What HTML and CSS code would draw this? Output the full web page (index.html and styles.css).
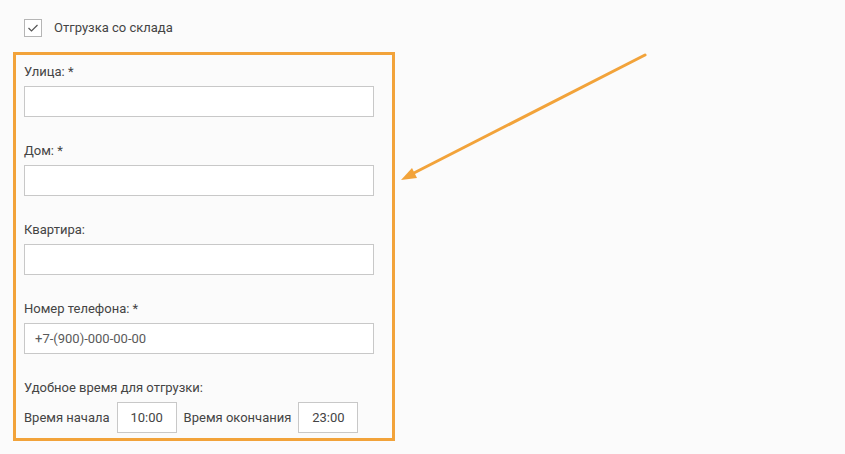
FILE: index.html
```html
<!DOCTYPE html>
<html lang="ru">
<head>
<meta charset="utf-8">
<link rel="stylesheet" href="styles.css">
</head>
<body>
<div class="page">
  <label class="check-row">
    <span class="checkbox">
      <svg width="12" height="10" viewBox="0 0 12 10"><path d="M1.5 5 L4.5 8 L10.5 2" fill="none" stroke="#555" stroke-width="1.2"/></svg>
    </span>
    <span class="check-label">Отгрузка со склада</span>
  </label>
  <div class="box">
    <div class="field">
      <div class="label">Улица: *</div>
      <div class="input"></div>
    </div>
    <div class="field">
      <div class="label">Дом: *</div>
      <div class="input"></div>
    </div>
    <div class="field">
      <div class="label">Квартира:</div>
      <div class="input"></div>
    </div>
    <div class="field">
      <div class="label">Номер телефона: *</div>
      <div class="input placeholder">+7-(900)-000-00-00</div>
    </div>
    <div class="field last">
      <div class="label">Удобное время для отгрузки:</div>
      <div class="time-row">
        <span class="time-label">Время начала</span>
        <span class="time-input">10:00</span>
        <span class="time-label">Время окончания</span>
        <span class="time-input">23:00</span>
      </div>
    </div>
  </div>
  <svg class="arrow" width="845" height="454" viewBox="0 0 845 454">
    <line x1="645" y1="55" x2="410" y2="175" stroke="#f2a33a" stroke-width="3" stroke-linecap="round"/>
    <polygon points="401,180 412,168 417,178" fill="#f2a33a"/>
  </svg>
</div>
</body>
</html>
```
FILE: styles.css
```css
html, body {
  margin: 0;
  padding: 0;
  background: #fbfbfb;
}
body {
  font-family: "Roboto", "Open Sans", sans-serif;
  font-size: 13px;
  color: #444;
  width: 845px;
  height: 454px;
  overflow: hidden;
}
.page {
  position: relative;
  padding: 19px 0 0 13px;
}
.check-row {
  display: flex;
  align-items: center;
  margin-left: 11px;
  height: 18px;
}
.checkbox {
  width: 16px;
  height: 16px;
  border: 1px solid #b5b5b5;
  background: #fff;
  display: flex;
  align-items: center;
  justify-content: center;
}
.check-label {
  margin-left: 12px;
  line-height: 18px;
}
.box {
  margin-top: 15px;
  width: 368px;
  border: 3px solid #f2a33a;
  padding: 8px 0 5px 8px;
  box-sizing: content-box;
}
.field {
  margin-bottom: 25px;
}
.field.last {
  margin-bottom: 0;
}
.label {
  line-height: 18px;
  height: 18px;
  margin-bottom: 5px;
}
.input {
  width: 348px;
  height: 29px;
  border: 1px solid #c8c8c8;
  background: #fff;
  line-height: 29px;
  box-sizing: content-box;
}
.input.placeholder {
  width: 338px;
  padding-left: 10px;
  color: #5a5a5a;
}
.time-row {
  display: flex;
  align-items: center;
}
.time-label {
  margin-right: 7px;
}
.time-input {
  width: 58px;
  height: 29px;
  border: 1px solid #c8c8c8;
  background: #fff;
  line-height: 29px;
  text-align: center;
  margin-right: 7px;
}
.arrow {
  position: absolute;
  left: 0;
  top: 0;
  pointer-events: none;
}
```
